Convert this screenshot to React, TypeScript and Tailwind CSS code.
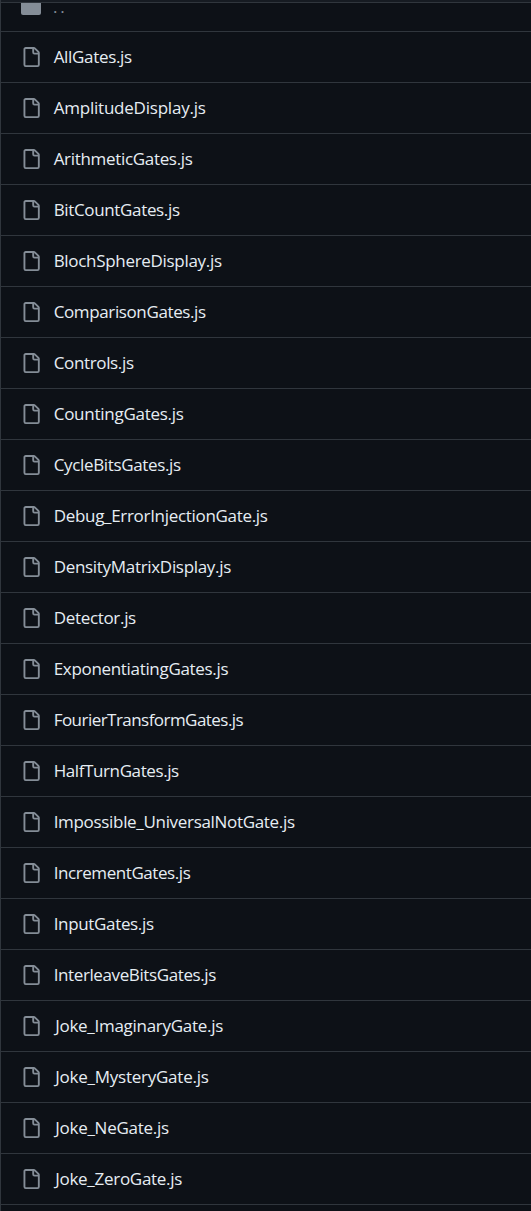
const files: [string, string][] = [
  ['AllGates.js', 'tracking-[-0.32px]'],
  ['AmplitudeDisplay.js', 'tracking-[-0.22px]'],
  ['ArithmeticGates.js', 'tracking-[-0.32px]'],
  ['BitCountGates.js', 'tracking-[-0.35px]'],
  ['BlochSphereDisplay.js', 'tracking-[-0.31px]'],
  ['ComparisonGates.js', 'tracking-[-0.38px]'],
  ['Controls.js', 'tracking-[-0.35px]'],
  ['CountingGates.js', 'tracking-[-0.26px]'],
  ['CycleBitsGates.js', 'tracking-[-0.35px]'],
  ['Debug_ErrorInjectionGate.js', 'tracking-[-0.31px]'],
  ['DensityMatrixDisplay.js', 'tracking-[-0.31px]'],
  ['Detector.js', 'tracking-[-0.32px]'],
  ['ExponentiatingGates.js', 'tracking-[-0.32px]'],
  ['FourierTransformGates.js', 'tracking-[-0.54px]'],
  ['HalfTurnGates.js', 'tracking-[-0.4px]'],
  ['Impossible_UniversalNotGate.js', 'tracking-[-0.32px]'],
  ['IncrementGates.js', 'tracking-[-0.43px]'],
  ['InputGates.js', 'tracking-[-0.34px]'],
  ['InterleaveBitsGates.js', 'tracking-[-0.39px]'],
  ['Joke_ImaginaryGate.js', 'pl-[1.5px] tracking-[-0.28px]'],
  ['Joke_MysteryGate.js', 'pl-[1.5px] tracking-[-0.24px]'],
  ['Joke_NeGate.js', 'pl-[1.5px] tracking-[-0.26px]'],
  ['Joke_ZeroGate.js', 'pl-[1.5px] tracking-[-0.28px]'],
];

function FileIcon() {
  return (
    <svg viewBox="0 0 16 16" className="size-5 shrink-0 fill-[#848d97]" aria-hidden="true">
      <path d="M2 1.75C2 .784 2.784 0 3.75 0h6.586c.464 0 .909.184 1.237.513l2.914 2.914c.329.328.513.773.513 1.237v9.586A1.75 1.75 0 0 1 13.25 16h-9.5A1.75 1.75 0 0 1 2 14.25Zm1.75-.25a.25.25 0 0 0-.25.25v12.5c0 .138.112.25.25.25h9.5a.25.25 0 0 0 .25-.25V6h-2.75A1.75 1.75 0 0 1 9 4.25V1.5Zm6.75.062V4.25c0 .138.112.25.25.25h2.688l-.011-.013-2.914-2.914-.013-.011Z" />
    </svg>
  );
}

export default function App() {
  return (
    <div className="h-[1211px] overflow-hidden border-l border-[#30363d] bg-[#0d1117] font-['Open_Sans',sans-serif] text-[17px] text-[#e6edf3]">
      <div className="h-[3px] border-b border-[#30363d] bg-[#161b22]" />
      <div className="flex h-7 items-start pl-5">
        <div className="h-3 w-5 rounded-b-[2px] bg-[#848d97]" />
        <span className="ml-[12px] -mt-[6px] leading-5 tracking-[2.7px] text-[#848d97]">..</span>
      </div>
      <ul>
        {files.map(([name, tracking]) => (
          <li key={name} className="flex h-[51px] items-center gap-[12.7px] border-t border-[#30363d] pl-5">
            <FileIcon />
            <span className={`whitespace-nowrap leading-6 ${tracking}`}>{name}</span>
          </li>
        ))}
      </ul>
      <div className="border-t border-[#30363d]" />
    </div>
  );
}
